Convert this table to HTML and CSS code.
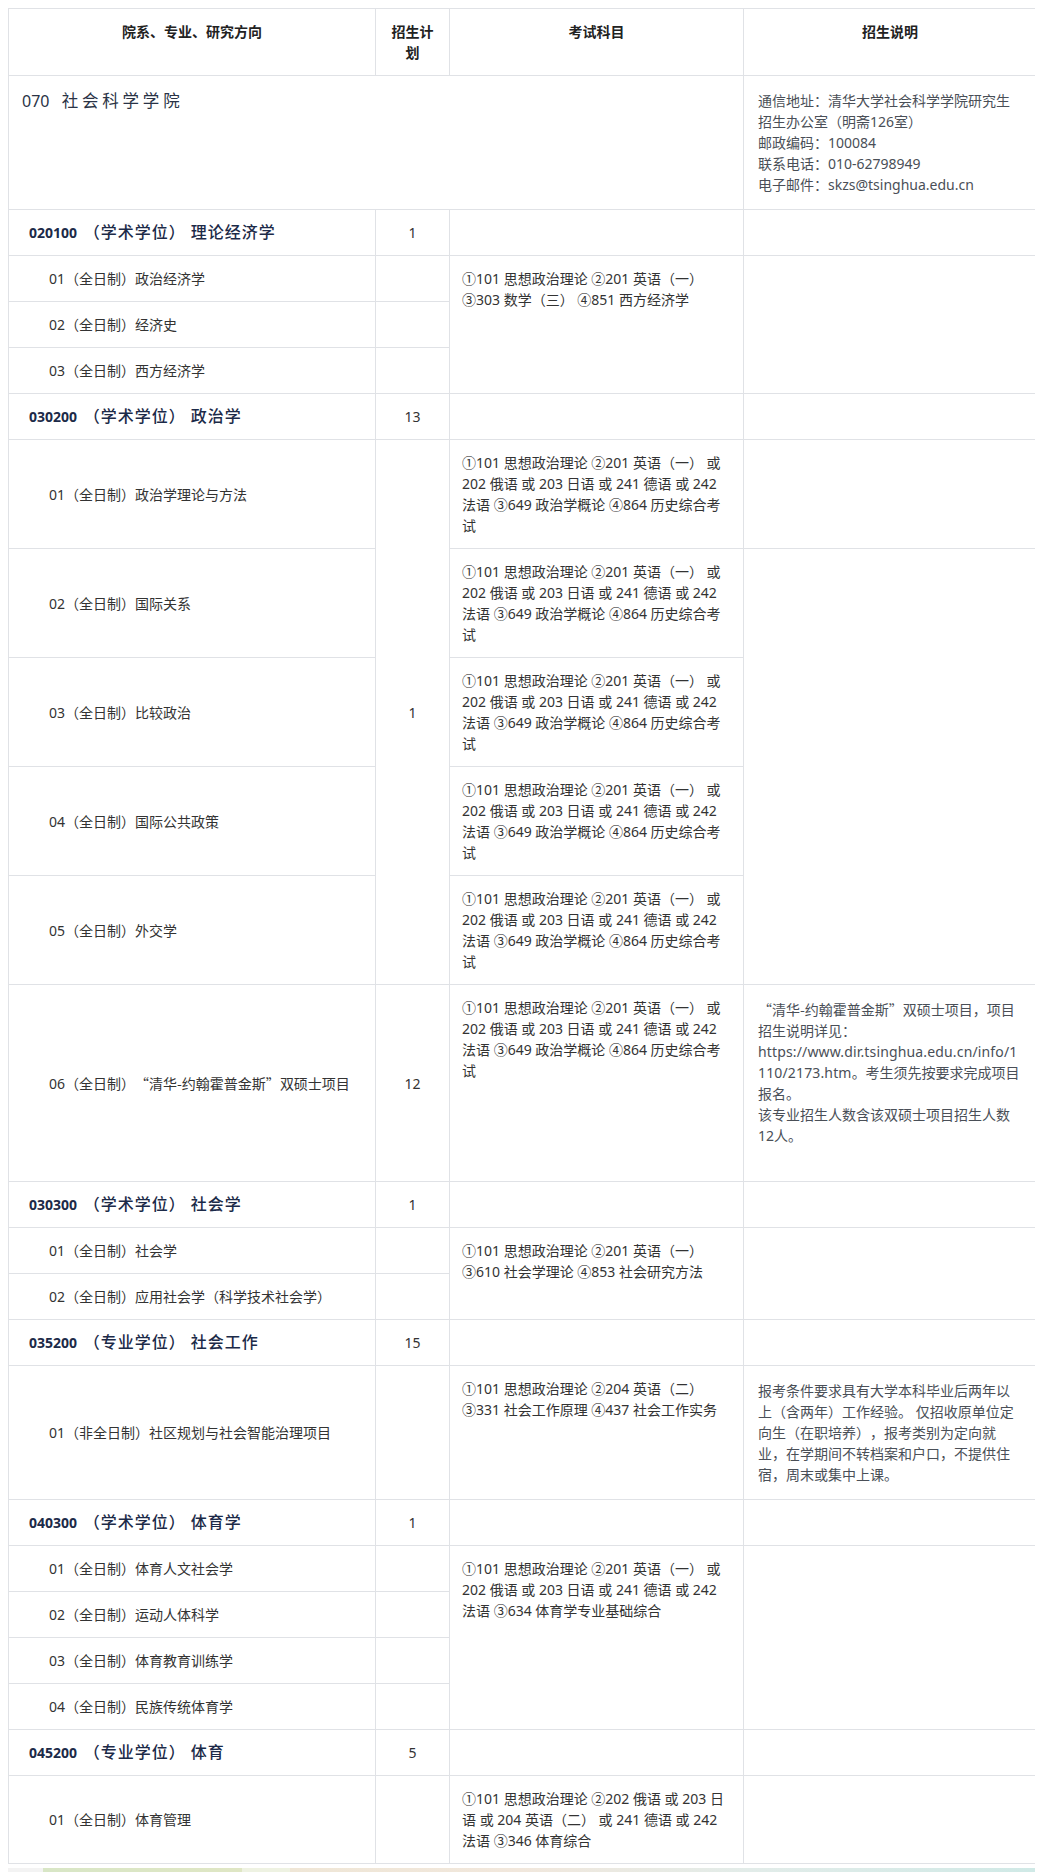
FILE: index.html
```html
<!DOCTYPE html>
<html lang="zh-CN">
<head>
<meta charset="utf-8">
<title>社会科学学院 招生目录</title>
<link rel="stylesheet" href="styles.css">
</head>
<body>
<table class="plan">
  <colgroup>
    <col class="c-major">
    <col class="c-num">
    <col class="c-exam">
    <col class="c-note">
  </colgroup>
  <thead>
    <tr>
      <th>院系、专业、研究方向</th>
      <th>招生计划</th>
      <th>考试科目</th>
      <th>招生说明</th>
    </tr>
  </thead>
  <tbody>
    <tr>
      <td class="dept" colspan="3"><span class="dept-code">070</span> <span class="dept-name">社会科学学院</span></td>
      <td class="note">通信地址：清华大学社会科学学院研究生招生办公室（明斋126室）<br>邮政编码：100084<br>联系电话：010-62798949<br>电子邮件：skzs@tsinghua.edu.cn</td>
    </tr>

    <tr>
      <td class="major"><b class="code">020100</b> <span class="kai">（学术学位） 理论经济学</span></td>
      <td class="num">1</td>
      <td class="exam"></td>
      <td class="note"></td>
    </tr>
    <tr>
      <td class="dir">01（全日制）政治经济学</td>
      <td class="num"></td>
      <td class="exam" rowspan="3">①101 思想政治理论 ②201 英语（一） ③303 数学（三） ④851 西方经济学</td>
      <td class="note" rowspan="3"></td>
    </tr>
    <tr>
      <td class="dir">02（全日制）经济史</td>
      <td class="num"></td>
    </tr>
    <tr>
      <td class="dir">03（全日制）西方经济学</td>
      <td class="num"></td>
    </tr>

    <tr>
      <td class="major"><b class="code">030200</b> <span class="kai">（学术学位） 政治学</span></td>
      <td class="num">13</td>
      <td class="exam"></td>
      <td class="note"></td>
    </tr>
    <tr>
      <td class="dir">01（全日制）政治学理论与方法</td>
      <td class="num" rowspan="5">1</td>
      <td class="exam">①101 思想政治理论 ②201 英语（一） 或 202 俄语 或 203 日语 或 241 德语 或 242 法语 ③649 政治学概论 ④864 历史综合考试</td>
      <td class="note"></td>
    </tr>
    <tr>
      <td class="dir">02（全日制）国际关系</td>
      <td class="exam">①101 思想政治理论 ②201 英语（一） 或 202 俄语 或 203 日语 或 241 德语 或 242 法语 ③649 政治学概论 ④864 历史综合考试</td>
      <td class="note" rowspan="4"></td>
    </tr>
    <tr>
      <td class="dir">03（全日制）比较政治</td>
      <td class="exam">①101 思想政治理论 ②201 英语（一） 或 202 俄语 或 203 日语 或 241 德语 或 242 法语 ③649 政治学概论 ④864 历史综合考试</td>
    </tr>
    <tr>
      <td class="dir">04（全日制）国际公共政策</td>
      <td class="exam">①101 思想政治理论 ②201 英语（一） 或 202 俄语 或 203 日语 或 241 德语 或 242 法语 ③649 政治学概论 ④864 历史综合考试</td>
    </tr>
    <tr>
      <td class="dir">05（全日制）外交学</td>
      <td class="exam">①101 思想政治理论 ②201 英语（一） 或 202 俄语 或 203 日语 或 241 德语 或 242 法语 ③649 政治学概论 ④864 历史综合考试</td>
    </tr>
    <tr>
      <td class="dir">06（全日制）<span class="cjk">“清华-约翰霍普金斯”</span>双硕士项目</td>
      <td class="num">12</td>
      <td class="exam">①101 思想政治理论 ②201 英语（一） 或 202 俄语 或 203 日语 或 241 德语 或 242 法语 ③649 政治学概论 ④864 历史综合考试</td>
      <td class="note"><span class="cjk">“清华-约翰霍普金斯”</span>双硕士项目，项目招生说明详见：<span class="url">https://www.dir.tsinghua.edu.cn/info/1110/2173.htm</span>。考生须先按要求完成项目报名。<br>该专业招生人数含该双硕士项目招生人数12人。<br><br></td>
    </tr>

    <tr>
      <td class="major"><b class="code">030300</b> <span class="kai">（学术学位） 社会学</span></td>
      <td class="num">1</td>
      <td class="exam"></td>
      <td class="note"></td>
    </tr>
    <tr>
      <td class="dir">01（全日制）社会学</td>
      <td class="num"></td>
      <td class="exam" rowspan="2">①101 思想政治理论 ②201 英语（一） ③610 社会学理论 ④853 社会研究方法</td>
      <td class="note" rowspan="2"></td>
    </tr>
    <tr>
      <td class="dir">02（全日制）应用社会学（科学技术社会学）</td>
      <td class="num"></td>
    </tr>

    <tr>
      <td class="major"><b class="code">035200</b> <span class="kai">（专业学位） 社会工作</span></td>
      <td class="num">15</td>
      <td class="exam"></td>
      <td class="note"></td>
    </tr>
    <tr>
      <td class="dir">01（非全日制）社区规划与社会智能治理项目</td>
      <td class="num"></td>
      <td class="exam">①101 思想政治理论 ②204 英语（二） ③331 社会工作原理 ④437 社会工作实务</td>
      <td class="note">报考条件要求具有大学本科毕业后两年以上（含两年）工作经验。 仅招收原单位定向生（在职培养），报考类别为定向就业，在学期间不转档案和户口，不提供住宿，周末或集中上课。</td>
    </tr>

    <tr>
      <td class="major"><b class="code">040300</b> <span class="kai">（学术学位） 体育学</span></td>
      <td class="num">1</td>
      <td class="exam"></td>
      <td class="note"></td>
    </tr>
    <tr>
      <td class="dir">01（全日制）体育人文社会学</td>
      <td class="num"></td>
      <td class="exam" rowspan="4">①101 思想政治理论 ②201 英语（一） 或 202 俄语 或 203 日语 或 241 德语 或 242 法语 ③634 体育学专业基础综合</td>
      <td class="note" rowspan="4"></td>
    </tr>
    <tr>
      <td class="dir">02（全日制）运动人体科学</td>
      <td class="num"></td>
    </tr>
    <tr>
      <td class="dir">03（全日制）体育教育训练学</td>
      <td class="num"></td>
    </tr>
    <tr>
      <td class="dir">04（全日制）民族传统体育学</td>
      <td class="num"></td>
    </tr>

    <tr>
      <td class="major"><b class="code">045200</b> <span class="kai">（专业学位） 体育</span></td>
      <td class="num">5</td>
      <td class="exam"></td>
      <td class="note"></td>
    </tr>
    <tr>
      <td class="dir">01（全日制）体育管理</td>
      <td class="num"></td>
      <td class="exam">①101 思想政治理论 ②202 俄语 或 203 日语 或 204 英语（二） 或 241 德语 或 242 法语 ③346 体育综合</td>
      <td class="note"></td>
    </tr>
  </tbody>
</table>
<div class="footer-strip"></div>
</body>
</html>
```

FILE: styles.css
```css
body {
  margin: 8px;
  background: #ffffff;
  font-family: "Noto Sans", "Noto Sans CJK SC", sans-serif;
  font-size: 14px;
  line-height: 21px;
  color: #333333;
  text-spacing-trim: space-all;
}

.cjk {
  font-family: "Noto Sans CJK SC", sans-serif;
}

.plan {
  width: 1028px;
  table-layout: fixed;
  border-collapse: collapse;
  border: 1px solid #e0e2e6;
}

.c-major { width: 367px; }
.c-num { width: 74px; }
.c-exam { width: 294px; }
.c-note { width: 293px; }

.plan th,
.plan td {
  border: 1px solid #e0e2e6;
  padding: 12px;
  line-height: 21px;
  vertical-align: middle;
}

.plan th {
  vertical-align: top;
  text-align: center;
  font-weight: 700;
  color: #222222;
}

.dept {
  vertical-align: top !important;
  padding-top: 14px !important;
  padding-left: 13px !important;
  font-size: 16px;
  color: #2a3346;
}

.dept-name {
  font-size: 16.5px;
  letter-spacing: 3.8px;
  margin-left: 8px;
}

.major {
  padding-left: 20px !important;
  color: #1c2a48;
}

.major .code {
  font-weight: 700;
  margin-right: 3px;
}

.major .kai {
  font-size: 16px;
  font-weight: 500;
  letter-spacing: 1px;
}

.dir {
  padding-left: 40px !important;
  color: #333333;
}

.num {
  text-align: center;
  color: #333333;
}

.exam {
  vertical-align: top !important;
  color: #333333;
}

.note {
  vertical-align: top !important;
  padding: 14px !important;
  color: #4a4f57;
  overflow-wrap: break-word;
}

.note .url {
  letter-spacing: 0.15px;
}

.footer-strip {
  margin: 4px -8px 0;
  height: 6px;
  background: linear-gradient(90deg, #f3f3f3 0, #f3f3f3 43px, #d8e6c6 43px, #dfe6c4 242px, #eef2e2 242px, #eef2e2 290px, #efe6d6 290px, #f1e7dc 520px, #e2ece9 750px, #cfe9e6 1043px);
}
```
